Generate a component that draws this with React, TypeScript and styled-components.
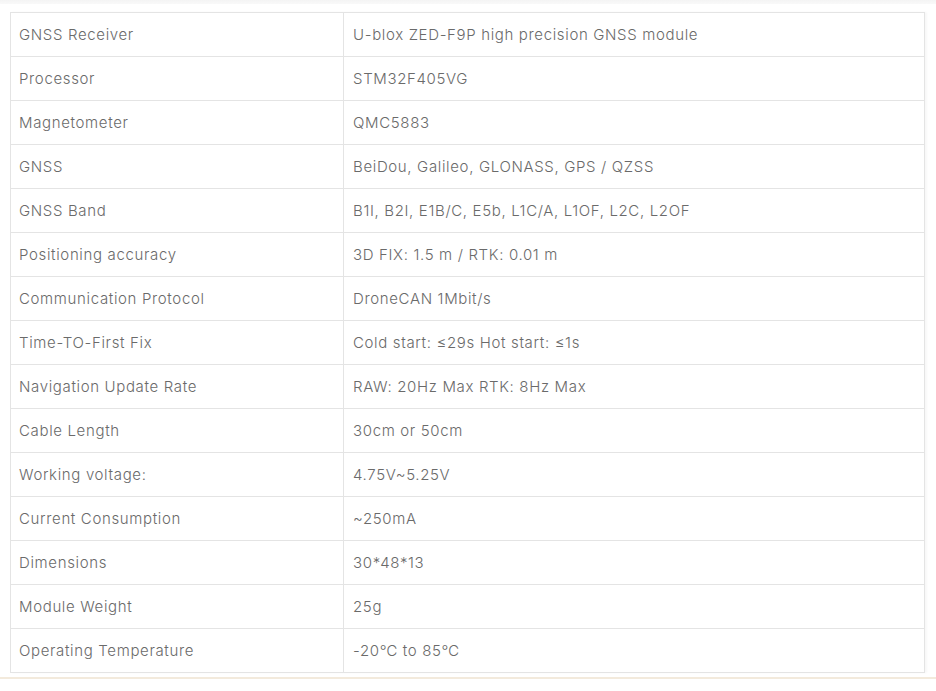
import React from "react";
import styled, { createGlobalStyle } from "styled-components";

const GlobalStyle = createGlobalStyle`
  html, body {
    margin: 0;
    padding: 0;
    background: #ffffff;
  }
`;

const Page = styled.div`
  width: 936px;
  height: 691px;
  background: #fff;
  font-family: Inter, "Noto Sans", sans-serif;
`;

const TopStrip = styled.div`
  height: 4px;
  background: linear-gradient(#f4f4f4, #f9f9f9);
`;

const Section = styled.div`
  padding: 8px 11px 0 10px;
`;

const SpecTable = styled.table`
  width: 915px;
  border-collapse: collapse;
  table-layout: fixed;
  box-shadow: 2px 0 2px rgba(0, 0, 0, 0.03);
`;

const Row = styled.tr`
  height: 44px;
`;

const Cell = styled.td<{ $first?: boolean }>`
  width: ${({ $first }) => ($first ? "333px" : "auto")};
  border: 1px solid #e4e4e4;
  padding: 0 0 0 ${({ $first }) => ($first ? "8px" : "9px")};
  font-size: 15px;
  font-weight: 300;
  letter-spacing: 0.65px;
  color: #6a6a6a;
  vertical-align: middle;
  box-sizing: border-box;
`;

const BottomRule = styled.div`
  margin-top: 4px;
  height: 2px;
  background: #f3eadc;
`;

const specs: [string, string][] = [
  ["GNSS Receiver", "U-blox ZED-F9P high precision GNSS module"],
  ["Processor", "STM32F405VG"],
  ["Magnetometer", "QMC5883"],
  ["GNSS", "BeiDou, Galileo, GLONASS, GPS / QZSS"],
  ["GNSS Band", "B1I, B2I, E1B/C, E5b, L1C/A, L1OF, L2C, L2OF"],
  ["Positioning accuracy", "3D FIX: 1.5 m / RTK: 0.01 m"],
  ["Communication Protocol", "DroneCAN 1Mbit/s"],
  ["Time-TO-First Fix", "Cold start: ≤29s Hot start: ≤1s"],
  ["Navigation Update Rate", "RAW: 20Hz Max RTK: 8Hz Max"],
  ["Cable Length", "30cm or 50cm"],
  ["Working voltage:", "4.75V~5.25V"],
  ["Current Consumption", "~250mA"],
  ["Dimensions", "30*48*13"],
  ["Module Weight", "25g"],
  ["Operating Temperature", "-20℃ to 85℃"],
];

export default function App() {
  return (
    <Page>
      <GlobalStyle />
      <TopStrip />
      <Section>
        <SpecTable>
          <tbody>
            {specs.map(([label, value]) => (
              <Row key={label}>
                <Cell $first>{label}</Cell>
                <Cell>{value}</Cell>
              </Row>
            ))}
          </tbody>
        </SpecTable>
      </Section>
      <BottomRule />
    </Page>
  );
}
